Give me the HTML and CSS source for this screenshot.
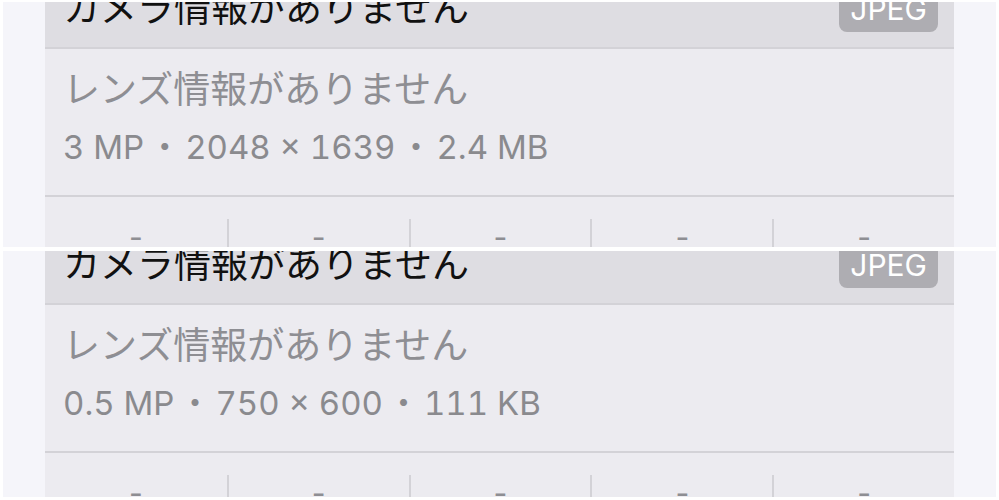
FILE: index.html
```html
<!DOCTYPE html>
<html lang="ja">
<head>
    <meta charset="UTF-8">
    <meta name="viewport" content="width=device-width, initial-scale=1.0">
    <title>写真の情報</title>
    <link rel="stylesheet" href="styles.css">
</head>
<body>
    <div class="shots">
        <div class="shot shot-first">
            <div class="info-card">
                <div class="card-head">
                    <div class="camera">カメラ情報がありません</div>
                    <div class="format-badge">JPEG</div>
                </div>
                <div class="card-body">
                    <div class="lens">レンズ情報がありません</div>
                    <div class="specs">3 MP<span class="sep">・</span>2048 × 1639<span class="sep">・</span>2.4 MB</div>
                </div>
                <div class="stats">
                    <div class="stat"><span class="dash">-</span></div>
                    <div class="stat"><span class="dash">-</span></div>
                    <div class="stat"><span class="dash">-</span></div>
                    <div class="stat"><span class="dash">-</span></div>
                    <div class="stat"><span class="dash">-</span></div>
                </div>
            </div>
        </div>
        <div class="shot shot-second">
            <div class="info-card">
                <div class="card-head">
                    <div class="camera">カメラ情報がありません</div>
                    <div class="format-badge">JPEG</div>
                </div>
                <div class="card-body">
                    <div class="lens">レンズ情報がありません</div>
                    <div class="specs">0.5 MP<span class="sep">・</span>750 × 600<span class="sep">・</span>111 KB</div>
                </div>
                <div class="stats">
                    <div class="stat"><span class="dash">-</span></div>
                    <div class="stat"><span class="dash">-</span></div>
                    <div class="stat"><span class="dash">-</span></div>
                    <div class="stat"><span class="dash">-</span></div>
                    <div class="stat"><span class="dash">-</span></div>
                </div>
            </div>
        </div>
    </div>
</body>
</html>
```

FILE: styles.css
```css
body {
    margin: 0;
    background: #fff;
    font-family: Inter, "Noto Sans CJK JP", sans-serif;
}

.shots {
    display: flex;
    flex-direction: column;
    gap: 4px;
    padding: 2px 3px 0;
}

.shot {
    height: 245px;
    overflow: hidden;
    background: #f5f5fa;
}

.shot-second {
    height: 246px;
}

.info-card {
    width: 909px;
    margin-left: 42px;
    background: #ecebf0;
}

/* scroll offset of each capture */
.shot-first .info-card {
    margin-top: -13px;
}

.shot-second .info-card {
    margin-top: -6px;
}

.card-head {
    height: 58px;
    display: flex;
    justify-content: space-between;
    align-items: flex-end;
    padding: 0 16px 0 18px;
    background: #dedde2;
    border-bottom: 2px solid #d3d2d7;
}

.camera {
    font-family: "Noto Sans CJK JP", sans-serif;
    font-size: 37px;
    line-height: 1;
    color: #111;
    padding-bottom: 22px;
}

.format-badge {
    margin-bottom: 15px;
    padding: 2px 11px 4px;
    background: #aeadb2;
    color: #fff;
    font-size: 30px;
    line-height: 38px;
    border-radius: 8px;
}

.card-body {
    height: 146px;
    padding: 0 18px;
    border-bottom: 2px solid #d3d2d7;
}

.lens {
    padding-top: 18px;
    font-family: "Noto Sans CJK JP", sans-serif;
    font-size: 37px;
    line-height: 40px;
    color: #8e8e93;
}

.specs {
    margin-top: 18px;
    font-size: 33px;
    line-height: 40px;
    font-variant-numeric: tabular-nums;
    color: #8a8a8e;
}

.sep {
    font-family: "Noto Sans CJK JP", sans-serif;
    margin: 0 4px;
}

.stats {
    display: grid;
    grid-template-columns: repeat(5, 1fr);
    padding-top: 22px;
}

.stat {
    height: 60px;
    text-align: center;
}

.stat + .stat {
    border-left: 2px solid #d3d2d7;
}

.dash {
    display: inline-block;
    margin-top: 3px;
    font-size: 30px;
    line-height: 30px;
    color: #8e8e93;
}
```
